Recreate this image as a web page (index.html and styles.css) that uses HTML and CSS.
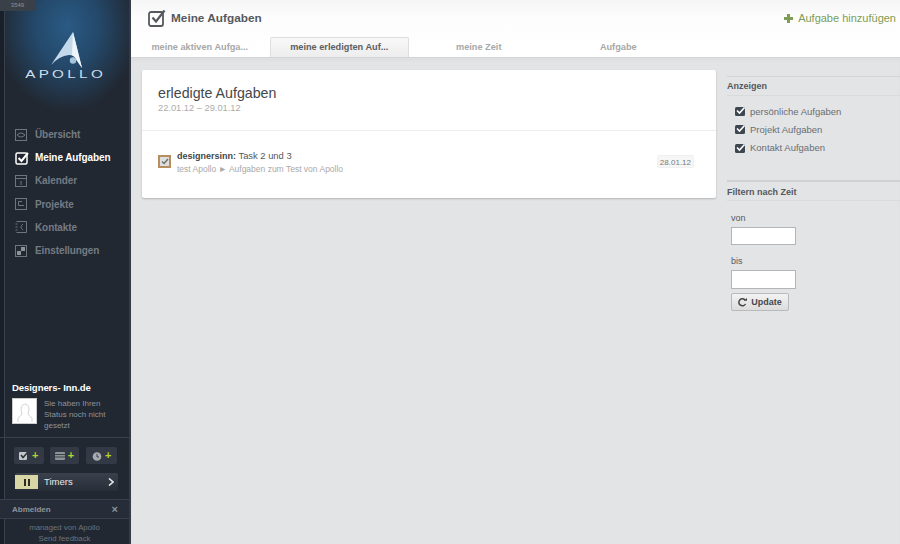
FILE: index.html
```html
<!DOCTYPE html>
<html lang="de">
<head>
<meta charset="utf-8">
<title>Meine Aufgaben</title>
<link rel="stylesheet" href="styles.css">
</head>
<body>
<div class="app">
  <aside class="sidebar">
    <div class="hero">
      <div class="counter">3549</div>
      <svg class="logo-mark" width="32" height="36" viewBox="0 0 32 36">
        <path d="M22 0 L31 36 L25.500 28 Q23 23 18 23 Q8 24 0 33 Z" fill="#c3d8ea"/>
        <path d="M22 0 L31 36 L25.500 28 Q24 24 21 23 Z" fill="#eef5fb"/>
        <circle cx="22" cy="28.500" r="3.200" fill="#a5c4dc"/>
      </svg>
      <div class="logo-text">APOLLO</div>
    </div>
    <nav class="nav">
      <a class="nav-item"><svg class="nav-icon" viewBox="0 0 12 12"><rect x=".5" y=".5" width="11" height="11" fill="none" stroke="#6f757d"/><path d="M2 6 Q6 2 10 6 Q6 10 2 6Z" fill="none" stroke="#6f757d"/></svg>Übersicht</a>
      <a class="nav-item active"><svg class="nav-icon" viewBox="0 0 14 14"><rect x="1" y="2" width="11" height="11" rx="1.500" fill="none" stroke="#fff" stroke-width="1.500"/><path d="M3.500 7 L6.500 10 L13 2" fill="none" stroke="#fff" stroke-width="2"/></svg>Meine Aufgaben</a>
      <a class="nav-item"><svg class="nav-icon" viewBox="0 0 12 12"><rect x=".5" y=".5" width="11" height="11" fill="none" stroke="#6f757d"/><path d="M1 3.500H11M6 6V10" stroke="#6f757d"/></svg>Kalender</a>
      <a class="nav-item"><svg class="nav-icon" viewBox="0 0 12 12"><rect x=".5" y=".5" width="11" height="11" fill="none" stroke="#6f757d"/><path d="M7 3.500H3.500V7.500H9" fill="none" stroke="#6f757d"/></svg>Projekte</a>
      <a class="nav-item"><svg class="nav-icon" viewBox="0 0 12 12"><path d="M1.500 .5H11.500V11.500H1.500M.5 3H2.500M.5 6H2.500M.5 9H2.500" fill="none" stroke="#6f757d"/><path d="M8 3 Q4 6 8 9" fill="none" stroke="#6f757d"/></svg>Kontakte</a>
      <a class="nav-item"><svg class="nav-icon" viewBox="0 0 12 12"><rect x=".5" y=".5" width="11" height="11" fill="none" stroke="#6f757d"/><rect x="2" y="6" width="4" height="4" fill="#8d9399"/><rect x="6" y="2" width="4" height="4" fill="#8d9399"/></svg>Einstellungen</a>
    </nav>
    <div class="user">
      <div class="user-name">Designers- Inn.de</div>
      <div class="user-row">
        <div class="avatar"><svg width="20" height="21" viewBox="0 0 20 21"><path d="M3 20 V16 Q6 14 7 12 Q4 3 10 2 Q16 3 13 12 Q14 14 17 16 V20" fill="none" stroke="#d5d5d5"/></svg></div>
        <p class="status">Sie haben Ihren Status noch nicht gesetzt</p>
      </div>
    </div>
    <div class="quick">
      <div class="quick-row">
        <button class="quick-btn"><svg width="10" height="9" viewBox="0 0 10 9"><rect x="0" y="1" width="8" height="8" rx="1" fill="#c4c7ca"/><path d="M2 4 L4 6.500 L9 1" fill="none" stroke="#2b313a" stroke-width="1.500"/></svg><span class="plus">+</span></button>
        <button class="quick-btn"><svg width="10" height="9" viewBox="0 0 10 9"><rect y="1" width="10" height="8" rx="1" fill="#8f9398"/><path d="M0 3.500H10M0 6H10" stroke="#3a4049"/></svg><span class="plus">+</span></button>
        <button class="quick-btn"><svg width="10" height="10" viewBox="0 0 10 10"><circle cx="5" cy="5.500" r="4.300" fill="#a8acb0"/><path d="M5 3V6H7" fill="none" stroke="#3a4049"/></svg><span class="plus">+</span></button>
      </div>
      <button class="timers">
        <span class="timer-flag"><svg width="6" height="7" viewBox="0 0 6 7"><path d="M0 0H2V7H0ZM4 0H6V7H4Z" fill="#2b2b22"/></svg></span>
        <span class="timer-label">Timers</span>
        <svg class="timer-arrow" width="6" height="8" viewBox="0 0 6 8"><path d="M1 .5 L5 4 L1 7.500" fill="none" stroke="#e8e8e8" stroke-width="1.600"/></svg>
      </button>
    </div>
    <div class="logout"><span>Abmelden</span><span class="close">×</span></div>
    <div class="side-foot">managed von Apollo<br>Send feedback</div>
  </aside>

  <main class="main">
    <header class="top">
      <div class="title-row">
        <h1 class="page-title">
          <svg width="18" height="18" viewBox="0 0 18 18"><rect x="1" y="3" width="14" height="14" rx="2" fill="none" stroke="#55595e" stroke-width="1.800"/><path d="M4.500 8.500 L8 12.500 L16.500 1.500" fill="none" stroke="#55595e" stroke-width="2.200"/></svg>
          Meine Aufgaben
        </h1>
        <a class="add-task"><svg width="9" height="9" viewBox="0 0 9 9"><path d="M3 0H6V3H9V6H6V9H3V6H0V3H3Z" fill="#7d9c55"/></svg>Aufgabe hinzufügen</a>
      </div>
      <div class="tabs">
        <a class="tab">meine aktiven Aufga...</a>
        <a class="tab tab-active">meine erledigten Auf...</a>
        <a class="tab">meine Zeit</a>
        <a class="tab">Aufgabe</a>
      </div>
    </header>
    <div class="content">
      <section class="card">
        <div class="card-head">
          <h2 class="card-title">erledigte Aufgaben</h2>
          <div class="card-date">22.01.12 – 29.01.12</div>
        </div>
        <div class="task">
          <span class="task-check"><svg width="8" height="7" viewBox="0 0 8 7"><path d="M1 3.500 L3 5.500 L7 1" fill="none" stroke="#6b6f6a" stroke-width="1.400"/></svg></span>
          <div class="task-body">
            <div class="task-name"><b>designersinn:</b> Task 2 und 3</div>
            <div class="task-path">test Apollo ► Aufgaben zum Test von Apollo</div>
          </div>
          <span class="task-date">28.01.12</span>
        </div>
      </section>
      <aside class="panel">
        <h3 class="panel-title">Anzeigen</h3>
        <ul class="checks">
          <li><svg width="11" height="10" viewBox="0 0 11 10"><rect y="1" width="10" height="9" rx="1.500" fill="#3e4650"/><path d="M2 4.500 L4.500 7 L9.500 1.500" fill="none" stroke="#fff" stroke-width="1.600"/></svg>persönliche Aufgaben</li>
          <li><svg width="11" height="10" viewBox="0 0 11 10"><rect y="1" width="10" height="9" rx="1.500" fill="#3e4650"/><path d="M2 4.500 L4.500 7 L9.500 1.500" fill="none" stroke="#fff" stroke-width="1.600"/></svg>Projekt Aufgaben</li>
          <li><svg width="11" height="10" viewBox="0 0 11 10"><rect y="1" width="10" height="9" rx="1.500" fill="#3e4650"/><path d="M2 4.500 L4.500 7 L9.500 1.500" fill="none" stroke="#fff" stroke-width="1.600"/></svg>Kontakt Aufgaben</li>
        </ul>
        <h3 class="panel-title filter-title">Filtern nach Zeit</h3>
        <form class="filter">
          <label class="field-label">von</label>
          <input class="field field-first" type="text">
          <label class="field-label bis">bis</label>
          <input class="field" type="text">
          <button class="update" type="button"><svg width="9" height="9" viewBox="0 0 9 9"><path d="M7.500 6 A3.500 3.500 0 1 1 7 2" fill="none" stroke="#444" stroke-width="1.500"/><path d="M5.500 2.800 H9 V0 Z" fill="#444"/></svg>Update</button>
        </form>
      </aside>
    </div>
  </main>
</div>
</body>
</html>
```

FILE: styles.css
```css
* { box-sizing: border-box; }
html, body { margin: 0; padding: 0; }
body { font-family: "Liberation Sans", Arial, sans-serif; background: #e3e4e6; overflow: hidden; }
.app { display: flex; width: 900px; height: 544px; overflow: hidden; }

/* sidebar */
.sidebar {
  width: 131px; height: 544px; flex: none; display: flex; flex-direction: column;
  background-color: #212832; border-right: 2px solid #343b46;
  box-shadow: inset 4px 0 0 #1a2029, inset 5px 0 0 #38404b;
}
.hero {
  height: 121px; position: relative; display: flex; flex-direction: column; align-items: center;
  padding: 32px 0 0 0; margin-left: 5px;
  background: radial-gradient(ellipse 70px 85px at 50% 22%, #2a5a84 0%, #24496b 45%, rgba(33,40,50,0) 100%);
}
.counter {
  position: absolute; left: -5px; top: 0; width: 35px; height: 11px; background: #3a4048;
  color: #8b9097; font-size: 6px; line-height: 11px; text-align: center; border-radius: 0 0 2px 0;
}
.logo-mark { display: block; margin-left: -1px; }
.logo-text {
  margin-top: 2px; color: #cfdeeb; font-size: 10px; line-height: 10px; letter-spacing: 2.200px;
  font-weight: 400; transform: scaleX(1.520); margin-left: -3px;
}
.nav { display: flex; flex-direction: column; padding: 2px 0 0 15px; flex: 1; }
.nav-item {
  display: flex; align-items: center; height: 23.200px; gap: 8px;
  color: #757b83; font-size: 10px; font-weight: 700; letter-spacing: -.1px;
}
.nav-icon { width: 12px; height: 12px; flex: none; }
.nav-item.active { color: #fff; }
.nav-item.active .nav-icon { width: 14px; height: 14px; margin-right: -2px; }

.user { padding: 0 0 0 12px; height: 56px; border-bottom: 1px solid #39404b; }
.user-name { color: #fff; font-size: 9.600px; font-weight: 700; line-height: 12px; letter-spacing: -.1px; }
.user-row { display: flex; gap: 7px; margin-top: 4px; }
.avatar { width: 25px; height: 26px; background: #fff; border: 1px solid #ccc; display: flex; align-items: flex-end; justify-content: center; }
.status { margin: 0; width: 62px; color: #8d939a; font-size: 8px; line-height: 11px; }

.quick { padding: 9px 12px 0 14px; height: 62px; border-bottom: 1px solid #39404b; }
.quick-row { display: flex; gap: 6px; }
.quick-btn {
  width: 30px; height: 17px; padding: 0; border: 0; border-radius: 2px; background: #333a45;
  display: flex; align-items: center; justify-content: center; gap: 3px;
}
.quick-btn:last-child { width: 31px; margin-left: 1px; }
.plus { color: #b5d334; font-size: 11px; line-height: 11px; font-weight: 700; font-family: "Liberation Sans", sans-serif; }
.timers {
  margin-top: 9px; margin-left: 1px; width: 103px; height: 18px; padding: 0; border: 0; border-radius: 2px;
  background: linear-gradient(#3a414c, #282e38); display: flex; align-items: center;
  font-family: inherit; color: #e8e8e8; font-size: 9.500px;
}
.timer-flag { width: 23px; height: 14px; background: #d8d6a4; display: flex; align-items: center; justify-content: center; }
.timer-label { margin-left: 6px; flex: 1; text-align: left; padding-bottom: 2px; }
.timer-arrow { margin-right: 4px; }

.logout {
  height: 19px; display: flex; justify-content: space-between; align-items: center; padding: 0 11px 0 12px;
  color: #8d939a; font-size: 8px; font-weight: 700; background: #262d38; border-bottom: 1px solid #39404b;
}
.close { font-size: 11px; line-height: 11px; }
.side-foot { color: #6d737b; font-size: 7.800px; line-height: 11px; text-align: center; padding-top: 3px; }

/* main */
.main { flex: 1; min-width: 0; display: flex; flex-direction: column; }
.top {
  height: 58px; flex: none; background: linear-gradient(#f5f5f5, #fdfdfd 30%, #fff);
  border-bottom: 1px solid #d3d4d6; display: flex; flex-direction: column;
}
.title-row { height: 38px; display: flex; justify-content: space-between; align-items: center; padding: 0 4px 1px 17px; }
.page-title { margin: 0; display: flex; align-items: center; gap: 5px; color: #55595e; font-size: 11.800px; font-weight: 700; }
.add-task { display: flex; align-items: center; gap: 5px; color: #7d9c55; font-size: 11px; }
.tabs { display: flex; height: 20px; margin-left: -1px; }
.tab { width: 139.500px; text-align: center; color: #a8a8a8; font-size: 9.200px; font-weight: 700; line-height: 21px; }
.tab-active {
  background: linear-gradient(#f8f8f8, #ededed); border: 1px solid #dedede; border-bottom: 0;
  color: #5c5f63; border-radius: 2px 2px 0 0; line-height: 19px;
}

.content { flex: 1; display: flex; align-items: flex-start; padding: 12px 0 0 11px; box-shadow: inset 0 3px 3px rgba(0,0,0,.025); }
.card {
  width: 574px; height: 128px; background: #fff; border-radius: 2px;
  box-shadow: 0 1px 2px rgba(0,0,0,.22);
}
.card-head { height: 61px; padding: 15px 16px 0; border-bottom: 1px solid #ececec; }
.card-title { margin: 0; color: #44474b; font-size: 14.200px; line-height: 16px; font-weight: 400; }
.card-date { margin-top: 1px; color: #acacac; font-size: 9.300px; line-height: 12px; }
.task { display: flex; align-items: flex-start; padding: 19px 22px 0 16px; }
.task-check {
  width: 13px; height: 13px; margin-top: 5px; border: 2px solid #b78f5e; background: #dedede;
  display: flex; align-items: center; justify-content: center; flex: none;
}
.task-body { margin-left: 6px; flex: 1; }
.task-name { color: #55585c; font-size: 9.400px; line-height: 12px; }
.task-name b { color: #44474b; font-size: 9px; }
.task-path { color: #a9a9a9; font-size: 8.500px; line-height: 13px; margin-top: 1px; }
.task-date {
  margin-top: 5px; padding: 0 2px; height: 13px; color: #77797c; font-size: 8px; line-height: 13px;
  background: #f6f6f6; border: 1px solid #f0f0f0; border-radius: 2px;
}

.panel { width: 173px; margin-left: 11px; padding-top: 6px; }
.panel-title {
  margin: 0; height: 20px; padding-left: 0; color: #55585c; font-size: 9px; line-height: 19px; font-weight: 700;
  border-top: 1px solid #d4d5d7; border-bottom: 1px solid #d9dadc;
}
.checks { list-style: none; margin: 0; padding: 6px 0 0 8px; height: 84px; }
.checks li { display: flex; align-items: center; gap: 4px; height: 18.300px; color: #6a6d71; font-size: 9.500px; }
.filter-title { border-top: 2px solid #d0d1d3; height: 21px; line-height: 20px; }
.filter { display: flex; flex-direction: column; align-items: flex-start; padding: 11px 0 0 4px; }
.field-label { color: #55585c; font-size: 9px; line-height: 12px; }
.bis { margin-top: 10px; }
.field {
  display: block; width: 65px; height: 19px; margin-top: 3px; padding: 0; background: #fff;
  border: 1px solid #b4b5b7; border-radius: 0;
}
.field-first { height: 18px; }
.update {
  margin-top: 4px; width: 58px; height: 18px; padding: 0; display: flex; align-items: center; justify-content: center; gap: 4px;
  background: linear-gradient(#f3f3f3, #dcdcdc); border: 1px solid #b9babb; border-radius: 2px;
  color: #45484c; font: 700 9px "Liberation Sans", sans-serif;
}
```
